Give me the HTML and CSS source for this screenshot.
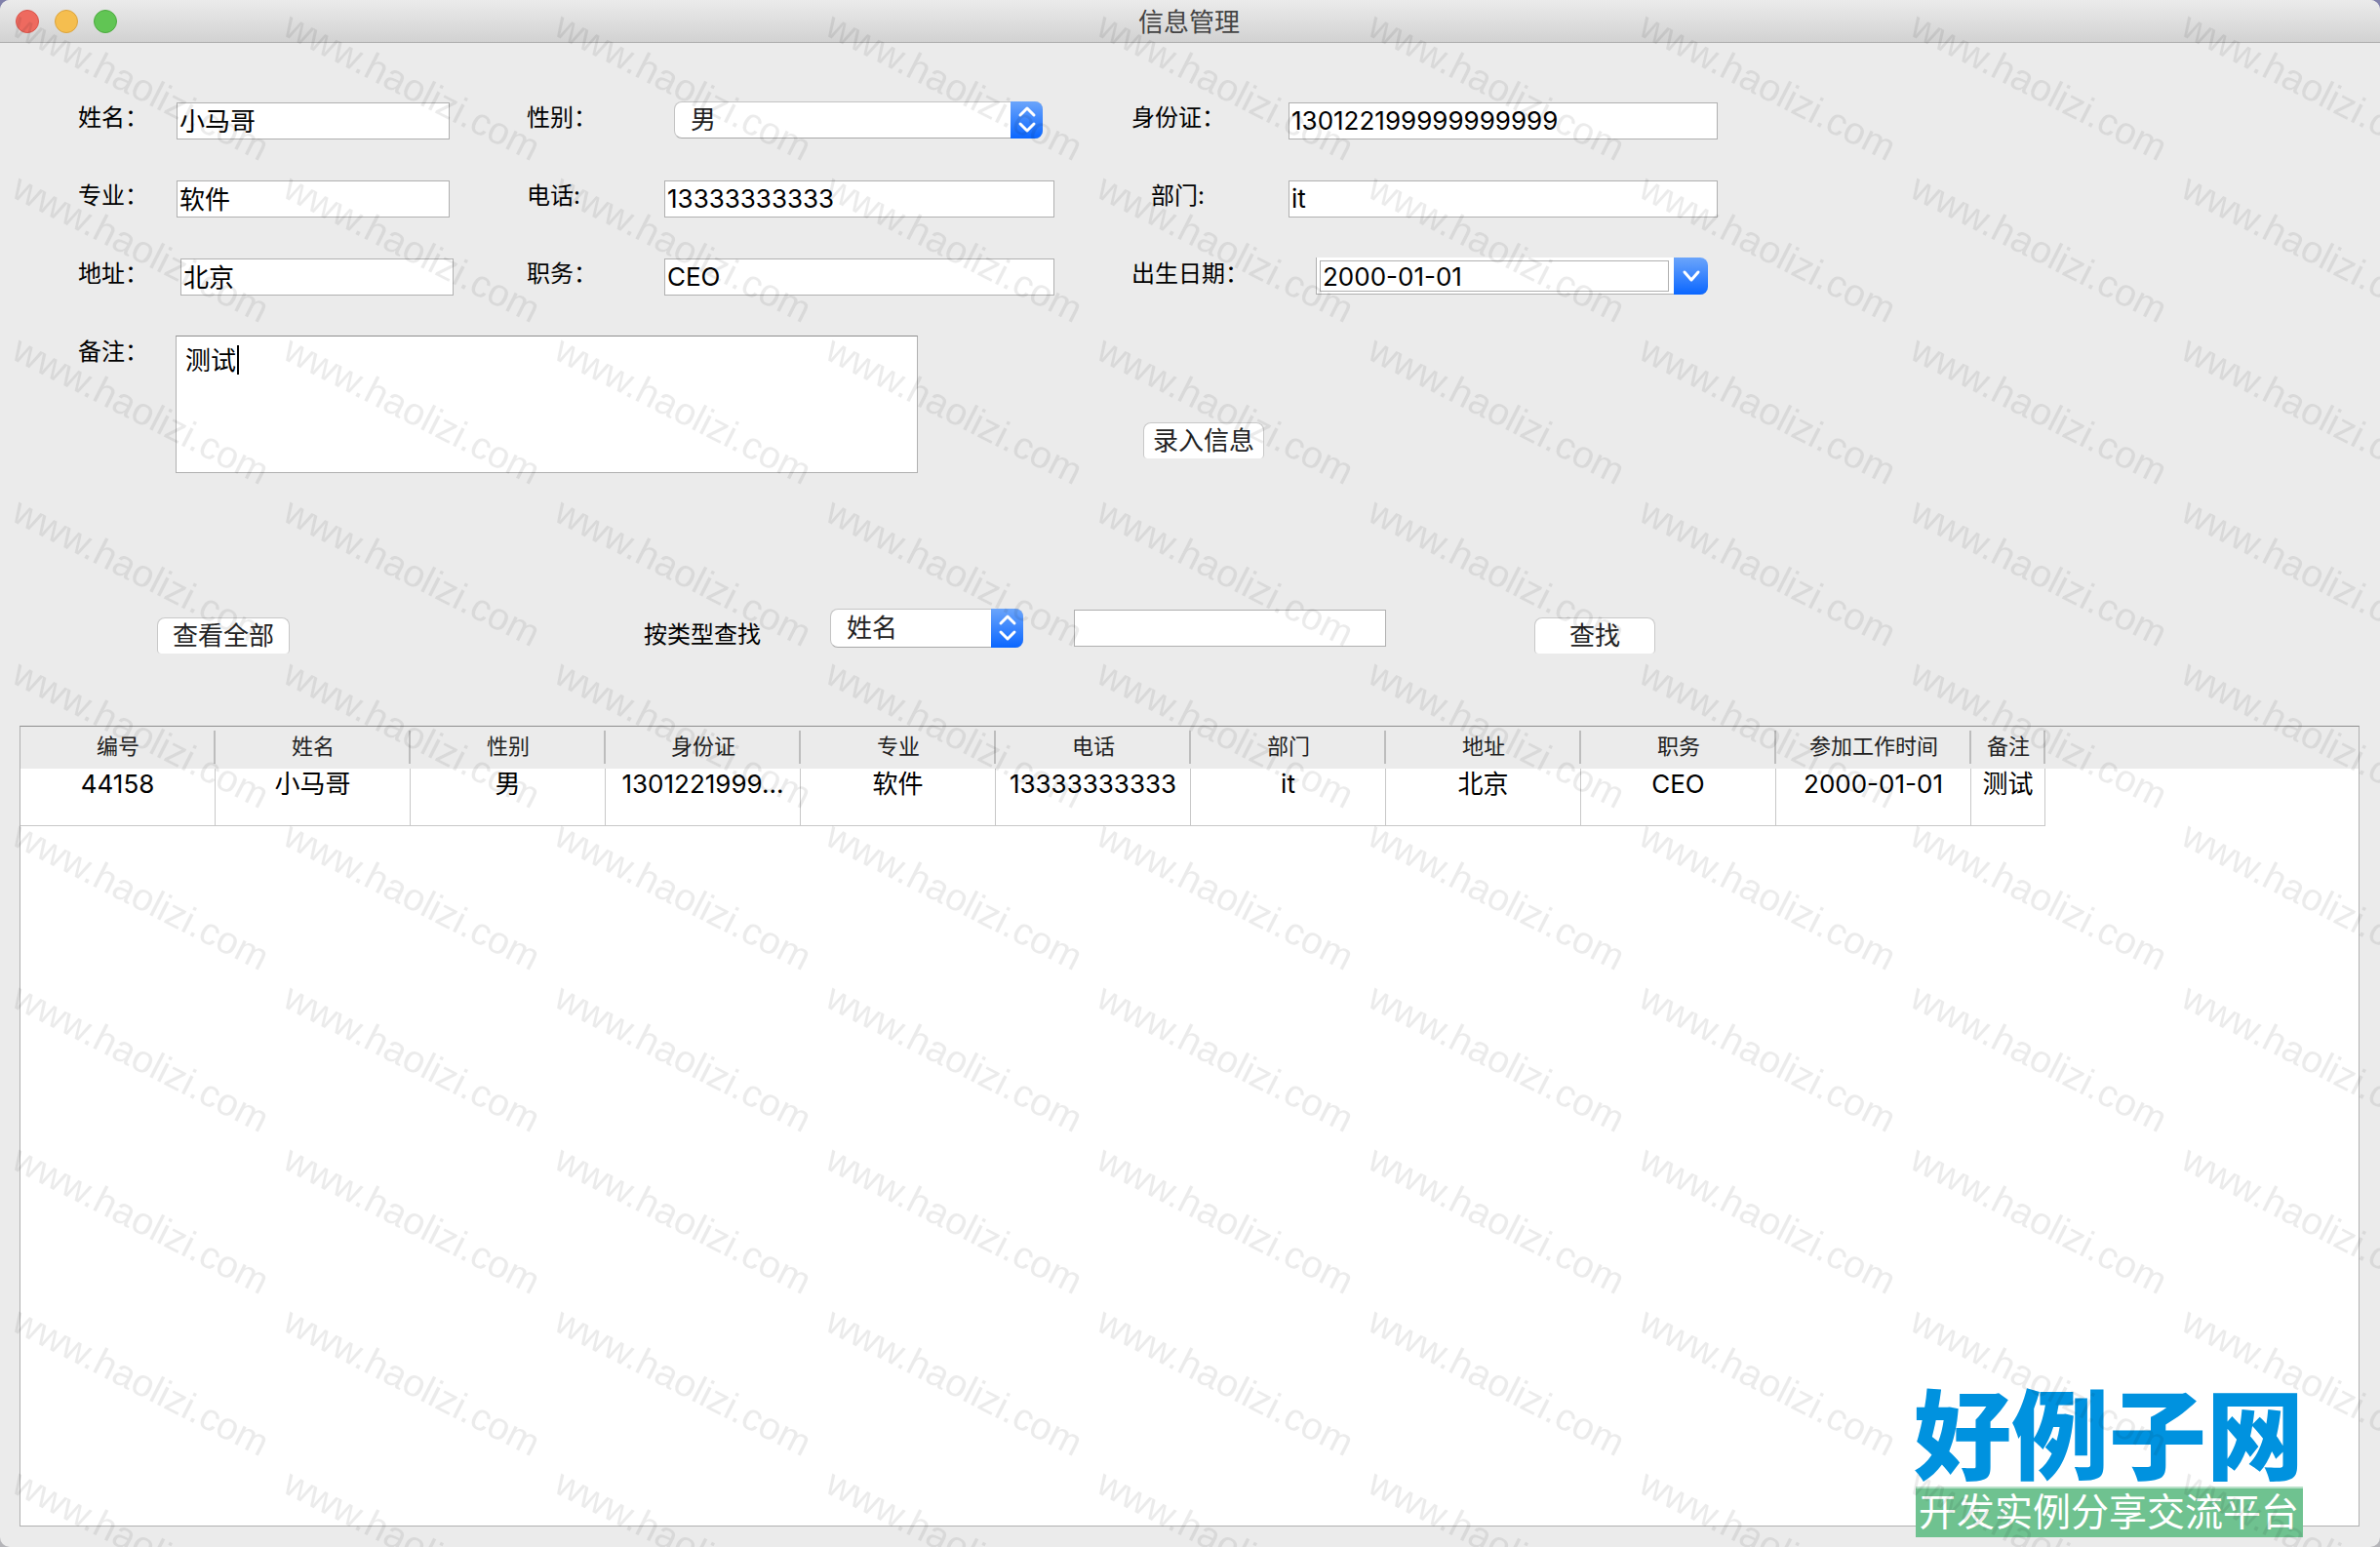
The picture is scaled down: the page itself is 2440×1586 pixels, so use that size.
FILE: index.html
```
<!DOCTYPE html>
<html lang="zh-CN">
<head>
    <meta charset="UTF-8">
    <meta name="viewport" content="width=device-width, initial-scale=1.0">
    <title>信息管理</title>
    <link rel="stylesheet" href="styles.css">
</head>
<body>
	<div class="window">
		<header class="titlebar">
			<div class="lights">
				<span class="light red"></span>
				<span class="light yellow"></span>
				<span class="light green"></span>
			</div>
			<h1>信息管理</h1>
		</header>

		<form class="infoForm">
			<label for="name">姓名：</label>
			<input type="text" id="name" class="short" value="小马哥">
			<label for="sex">性别：</label>
			<div class="selectBox sexBox">
				<select id="sex">
					<option>男</option>
					<option>女</option>
				</select>
				<svg class="arrows" viewBox="0 0 33 38"><path d="M10 14l7-7 7 7M10 23l7 7 7-7"/></svg>
			</div>
			<label for="card">身份证：</label>
			<input type="text" id="card" class="long" value="130122199999999999">

			<label for="major">专业：</label>
			<input type="text" id="major" class="short" value="软件">
			<label for="phone">电话:</label>
			<input type="text" id="phone" class="middle" value="13333333333">
			<label for="dept" class="indent">部门:</label>
			<input type="text" id="dept" class="long" value="it">

			<label for="address">地址：</label>
			<input type="text" id="address" class="short shifted" value="北京">
			<label for="job">职务：</label>
			<input type="text" id="job" class="middle" value="CEO">
			<label for="birth">出生日期：</label>
			<div class="dateBox">
				<input type="text" id="birth" value="2000-01-01">
				<button type="button" aria-label="选择日期"><svg viewBox="0 0 35 38"><path d="M11 15l7 8 7-8"/></svg></button>
			</div>

			<label for="remark">备注：</label>
			<div class="remarkBox">
				<textarea id="remark">测试</textarea>
				<span class="caret"></span>
			</div>
			<button type="button" class="btn save">录入信息</button>
		</form>

		<form class="searchBar">
			<button type="button" class="btn all">查看全部</button>
			<label for="type">按类型查找</label>
			<div class="selectBox typeBox">
				<select id="type">
					<option>姓名</option>
					<option>电话</option>
				</select>
				<svg class="arrows" viewBox="0 0 33 38"><path d="M10 14l7-7 7 7M10 23l7 7 7-7"/></svg>
			</div>
			<input type="text" class="keyword" aria-label="关键字">
			<button type="button" class="btn find">查找</button>
		</form>

		<div class="tableBox">
			<table>
				<colgroup>
					<col span="10" class="col">
					<col class="colLast">
					<col>
				</colgroup>
				<thead>
					<tr>
						<th>编号</th>
						<th>姓名</th>
						<th>性别</th>
						<th>身份证</th>
						<th>专业</th>
						<th>电话</th>
						<th>部门</th>
						<th>地址</th>
						<th>职务</th>
						<th>参加工作时间</th>
						<th>备注</th>
						<td class="rest"></td>
					</tr>
				</thead>
				<tbody>
					<tr>
						<td>44158</td>
						<td>小马哥</td>
						<td>男</td>
						<td>1301221999...</td>
						<td>软件</td>
						<td>13333333333</td>
						<td>it</td>
						<td>北京</td>
						<td>CEO</td>
						<td>2000-01-01</td>
						<td>测试</td>
						<td class="rest"></td>
					</tr>
				</tbody>
			</table>
		</div>

		<div class="logo">
			<strong>好例子网</strong>
			<span>开发实例分享交流平台</span>
		</div>

		<svg class="watermark" aria-hidden="true">
			<defs>
				<pattern id="mark" width="278" height="166" y="8" patternUnits="userSpaceOnUse">
					<text x="10" y="27" transform="rotate(27 10 27)">www.haolizi.com</text>
				</pattern>
			</defs>
			<rect width="100%" height="100%" fill="url(#mark)"/>
		</svg>
	</div>
</body>
</html>
```
FILE: styles.css
```
*{
	box-sizing: border-box;
}
body,html{
	margin: 0;
	padding: 0;
	background: linear-gradient(#8080aa 50%, #b4b4b8 50%);
	font-family: Inter, "Noto Sans CJK SC", sans-serif;
	font-size: 26px;
	color: #000;
}
input,select,textarea,button{
	font-family: inherit;
	font-size: 26px;
	color: #000;
	margin: 0;
	border-radius: 0;
	outline: none;
}
.window{
	position: relative;
	display: flex;
	flex-direction: column;
	min-height: 100vh;
	background: #ebebeb;
	border-radius: 10px;
	overflow: hidden;
}
/* title bar */
.titlebar{
	display: grid;
	grid-template-columns: 1fr auto 1fr;
	align-items: center;
	height: 44px;
	padding: 0 18px 0 16px;
	background: linear-gradient(#ebebeb, #d2d2d2);
	border-bottom: 1px solid #adadad;
}
.titlebar h1{
	margin: 0;
	padding-top: 2px;
	font-size: 26px;
	line-height: 40px;
	font-weight: 400;
	color: #444;
}
.lights{
	display: flex;
	gap: 16px;
}
.light{
	width: 24px;
	height: 24px;
	border-radius: 50%;
	border: 1px solid;
}
.red{background: #ee6a5f;border-color: #d9534a;}
.yellow{background: #f5be4f;border-color: #dba33c;}
.green{background: #61c554;border-color: #4caa3f;}

/* entry form */
.infoForm{
	display: grid;
	grid-template-columns: 101px 359px 141px 479px 161px 1fr;
	row-gap: 42px;
	padding: 61px 20px 0 80px;
}
.infoForm label{
	font-size: 24px;
	line-height: 32px;
	height: 38px;
}
.infoForm .indent{
	padding-left: 20px;
}
input{
	height: 38px;
	padding: 0 2px 2px;
	background: #fff;
	border: 1px solid #b0b0b0;
}
.short{width: 280px;padding-bottom: 4px;}
.middle{width: 400px;}
.long{width: 440px;}
.shifted{margin-left: 4px;}
.selectBox{
	position: relative;
	height: 38px;
}
.selectBox select{
	appearance: none;
	width: 100%;
	height: 100%;
	padding: 0 40px 2px 16px;
	color: #222;
	background: #fff;
	border: 1px solid #c4c4c4;
	border-bottom-color: #a8a8a8;
	border-radius: 8px;
}
.arrows{
	position: absolute;
	top: 0;
	right: 0;
	width: 33px;
	height: 100%;
	border-radius: 0 8px 8px 0;
	background: linear-gradient(#6ba5fb, #0a66ff);
	pointer-events: none;
}
.arrows path,.dateBox path{
	fill: none;
	stroke: #fff;
	stroke-width: 3;
	stroke-linecap: round;
	stroke-linejoin: round;
}
.sexBox{
	width: 378px;
	margin: -1px 0 0 10px;
}
.dateBox{
	display: flex;
	width: 402px;
	height: 38px;
	margin: -1px 0 0 28px;
	padding: 3px 0 3px 3px;
	background: #fff;
	border: 1px solid #b0b0b0;
	border-width: 0 0 1px 1px;
	border-radius: 0 8px 8px 0;
}
.dateBox input{
	flex: 1;
	min-width: 0;
	height: 32px;
	padding-bottom: 0;
	margin-right: 5px;
}
.dateBox button{
	width: 35px;
	height: 38px;
	margin-top: -3px;
	padding: 0;
	border: 0;
	border-radius: 0 8px 8px 0;
	background: linear-gradient(#6ba5fb, #0a66ff);
}
.dateBox svg{
	display: block;
}
.remarkBox{
	position: relative;
	grid-column: 2 / 5;
	width: 761px;
	height: 141px;
	margin: -1px 0 0 -1px;
}
.remarkBox textarea{
	display: block;
	width: 100%;
	height: 100%;
	padding: 7px 9px;
	line-height: 36px;
	border: 1px solid #b0b0b0;
	border-top-color: #8e8e8e;
	resize: none;
}
.caret{
	position: absolute;
	top: 10px;
	left: 63px;
	width: 2px;
	height: 30px;
	background: #000;
}
.btn{
	height: 37px;
	padding: 0;
	line-height: 36px;
	color: #222;
	background: #fff;
	border: 1px solid #c8c8c8;
	border-bottom: 0;
	border-radius: 8px 8px 4px 4px;
}
.save{
	width: 124px;
	margin: 88px 0 0 12px;
}

/* search */
.searchBar{
	display: flex;
	align-items: flex-start;
	height: 120px;
	margin-top: 139px;
	padding-left: 161px;
}
.searchBar .btn,.searchBar label{
	margin-top: 9px;
}
.searchBar label{
	width: 191px;
	margin-left: 363px;
	font-size: 24px;
	line-height: 36px;
}
.all{width: 136px;}
.typeBox{
	width: 198px;
	height: 40px;
}
.keyword{
	width: 320px;
	margin: 1px 152px 0 52px;
}
.find{width: 124px;}

/* result table */
.tableBox{
	flex: 1;
	margin: 0 21px 21px 20px;
	background: #fff;
	border: 1px solid #b0b0b0;
	border-top-color: #8e8e8e;
}
table{
	table-layout: fixed;
	width: 100%;
	border-collapse: separate;
	border-spacing: 0;
}
.col{width: 200px;}
.colLast{width: 76px;}
thead{
	background: #ebebeb;
}
th{
	height: 43px;
	padding: 0;
	font-size: 22px;
	line-height: 40px;
	font-weight: 400;
	vertical-align: top;
	color: #222;
	background: linear-gradient(#bdbdbd, #bdbdbd) right 4px / 2px 34px no-repeat;
}
tbody td{
	height: 59px;
	padding: 0;
	line-height: 32px;
	text-align: center;
	vertical-align: top;
	white-space: nowrap;
	border-right: 1px solid #c8c8c8;
	border-bottom: 1px solid #c8c8c8;
}
tbody .rest{
	border: 0;
}

/* site logo over the lower corner */
.logo{
	position: absolute;
	right: 78px;
	bottom: 10px;
	display: flex;
	flex-direction: column;
	align-items: center;
}
.logo strong{
	margin-bottom: 4px;
	font-family: "Noto Sans CJK SC", sans-serif;
	font-size: 100px;
	line-height: 108px;
	font-weight: 900;
	color: #0092df;
}
.logo span{
	width: 397px;
	height: 52px;
	font-size: 39px;
	line-height: 48px;
	text-align: center;
	color: #fff;
	background: #6fc290;
	border-top: 2px solid #b7e0c8;
}
.watermark{
	position: absolute;
	top: 0;
	left: 0;
	width: 100%;
	height: 100%;
	pointer-events: none;
}
.watermark text{
	font-family: "Liberation Sans", sans-serif;
	font-size: 39px;
	fill: rgba(0,0,0,0.08);
}
```
